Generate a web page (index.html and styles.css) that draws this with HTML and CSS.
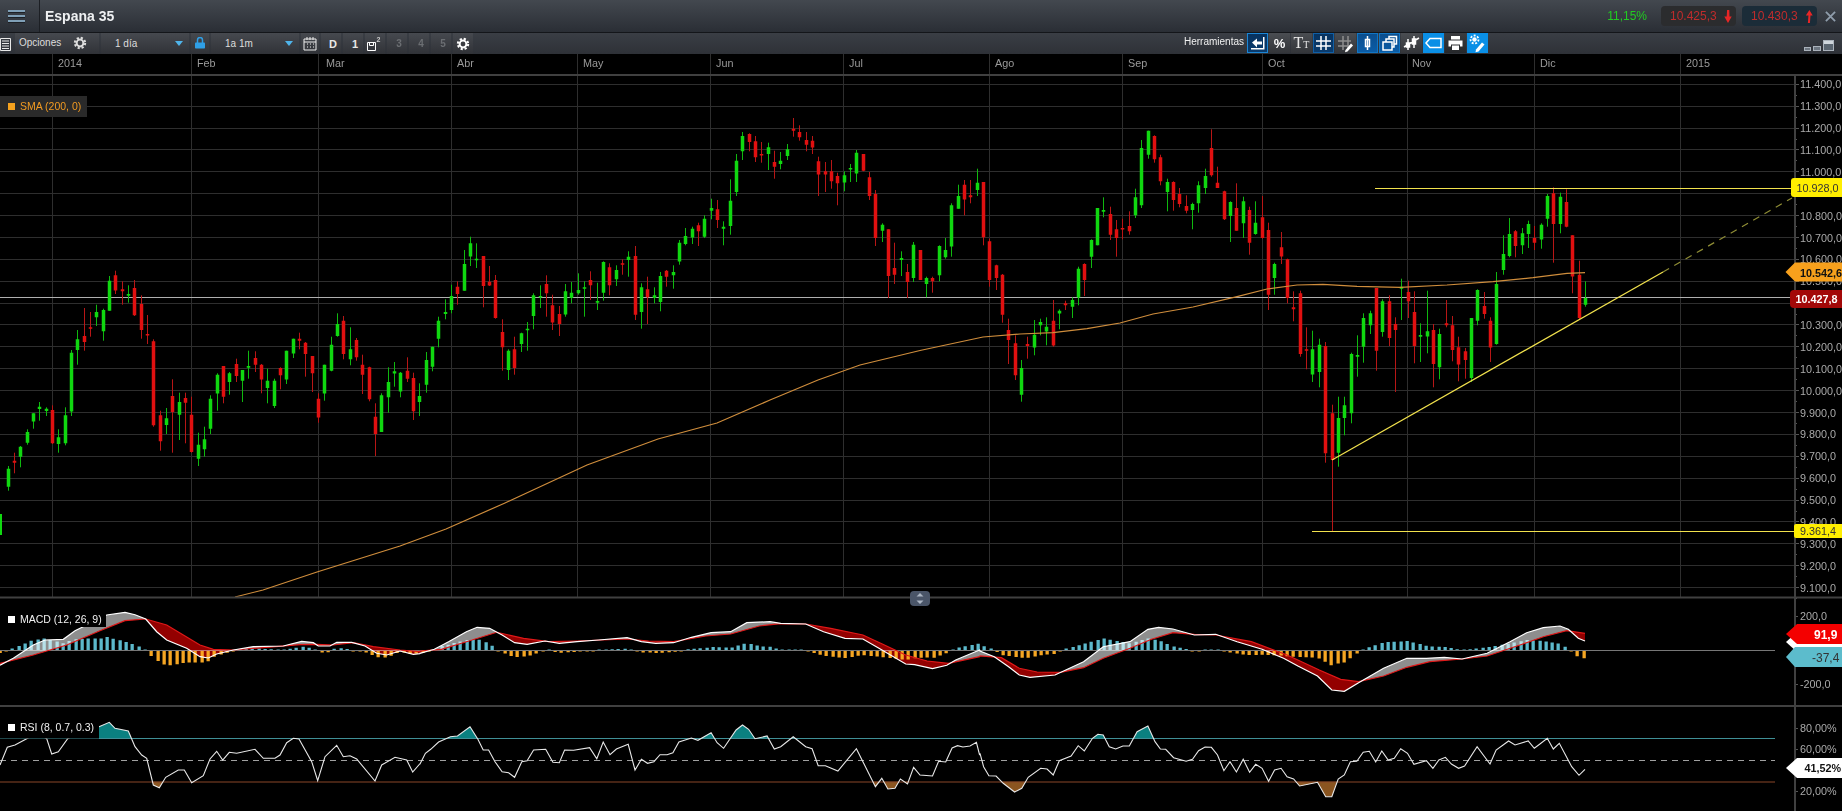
FILE: index.html
```html
<!DOCTYPE html>
<html lang="es">
<head>
<meta charset="utf-8">
<title>Espana 35</title>
<link rel="stylesheet" href="styles.css">
</head>
<body>
<div class="app">
  <header class="topbar">
    <button class="menu" aria-label="Menu"><span></span><span></span><span></span></button>
    <h1 class="title">Espana 35</h1>
    <div class="quotes">
      <span class="change">11,15%</span>
      <span class="quote bid">10.425,3
        <svg class="arrow" viewBox="0 0 8 14"><path d="M3 0h2.400l.2 7H8l-4 7-4-7h2.600z"/></svg>
      </span>
      <span class="quote ask">10.430,3
        <svg class="arrow" viewBox="0 0 8 14"><path d="M4.400 0L8 6H5.600l-.6 8H2.800l.6-8H.6z"/></svg>
      </span>
      <svg class="close" viewBox="0 0 12 12"><path d="M1 1l10 10M11 1L1 11"/></svg>
    </div>
  </header>

  <nav class="toolbar">
    <div class="tile tile-doc">
      <svg viewBox="0 0 11 16" class="ico-doc"><path d="M.5 2.500h10v12H.5zM2 5h7M2 7.500h7M2 10h7M2 12.500h7"/></svg>
    </div>
    <div class="tile tile-opt">
      <span>Opciones</span>
      <svg class="gear" viewBox="0 0 14 14"><circle cx="7" cy="7" r="3.400"/><circle class="teeth" cx="7" cy="7" r="5.200"/></svg>
    </div>
    <div class="tile tile-sel"><span>1 día</span><i class="caret"></i></div>
    <div class="tile tile-ico">
      <svg class="ico-lock" viewBox="0 0 10 12"><path class="shackle" d="M2.500 6V3a2.500 2.500 0 0 1 5 0v3"/><rect y="5.500" width="10" height="6" rx=".8"/></svg>
    </div>
    <div class="tile tile-sel"><span>1a 1m</span><i class="caret"></i></div>
    <div class="tile tile-cal">
      <svg class="ico-cal" viewBox="0 0 14 15"><path d="M1 3h12v11H1zM1 6h12M4 1v3M7 1v3M10 1v3M4 8h1M7 8h1M10 8h1M4 11h1M7 11h1M10 11h1"/></svg>
    </div>
    <div class="tile tile-num strong shift">D</div>
    <div class="tile tile-num strong shift">1</div>
    <div class="tile tile-num save">
      <svg class="ico-save" viewBox="0 0 9 9"><path d="M.5.5h8v8h-8zM2.500.5v3h4v-3"/></svg><sup>2</sup>
    </div>
    <div class="tile tile-num dim shift">3</div>
    <div class="tile tile-num dim shift">4</div>
    <div class="tile tile-num dim shift">5</div>
    <div class="tile tile-num">
      <svg class="gear white" viewBox="0 0 14 14"><circle cx="7" cy="7" r="3.400"/><circle class="teeth" cx="7" cy="7" r="5.200"/></svg>
    </div>

    <div class="tools">
      <span class="tools-label">Herramientas</span>
      <div class="tool on-dark frame"><svg class="solid" viewBox="0 0 21 20"><path d="M5 9.500L10 5.500v3h5v3h-5v3zM16 4h1.500v12.500H4V15h12z"/></svg></div>
      <div class="tool"><span class="pct">%</span></div>
      <div class="tool"><span class="tt">T<small>T</small></span></div>
      <div class="tool on-dark"><svg class="bold" viewBox="0 0 21 20"><path d="M8 3v14M13 3v14M3 8h15M3 13h15"/></svg></div>
      <div class="tool"><svg class="bold" viewBox="0 0 21 20"><path class="faint" d="M8 3v14M13 3v14M3 8h13M3 13h13"/><path class="fat" d="M10.500 17l5.500-6.500 2 2-5.500 6-2.500.8z"/></svg></div>
      <div class="tool on-mid"><svg class="bold" viewBox="0 0 21 20"><path d="M10.500 3v14M8.500 6.500h4v7h-4z"/></svg></div>
      <div class="tool on-mid"><svg class="bold" viewBox="0 0 21 20"><path d="M4 9h9v8H4zM7 9V6h8v8h-2M10 6V3.500h7.500v7.500H15"/></svg></div>
      <div class="tool"><svg class="bold" viewBox="0 0 21 20"><path d="M7 6v11M5.500 10h3v4h-3zM13 3v12M11.500 6h3v5h-3zM3 14L18 5"/></svg></div>
      <div class="tool on-bright"><svg class="bold" viewBox="0 0 21 20"><path d="M7 5.500h11v9H7L3 10z"/></svg></div>
      <div class="tool tool-dark"><svg class="solid" viewBox="0 0 21 20"><path d="M6 3h9v3.500H6zM3.500 7.500h14v6h-2.500v-2H6v2H3.500zM7 12.500h7V17H7z"/></svg></div>
      <div class="tool on-bright"><svg viewBox="0 0 21 20"><circle class="hub" cx="7.500" cy="6.500" r="2.200"/><circle class="teeth2" cx="7.500" cy="6.500" r="4"/><path class="fat" d="M9 16.500l6-7 2.500 2-6 7-3 .8z"/></svg></div>
    </div>

    <div class="win-btns"><i></i><i class="mid"></i><i class="calc"></i></div>
  </nav>

  <main class="stage">
    <svg class="chart" viewBox="0 54 1842 757" width="1842" height="757" xmlns="http://www.w3.org/2000/svg">
      <g id="grid"></g>
      <line class="last" x1="0" y1="297.500" x2="1790" y2="297.500"/>
      <g id="candles"></g>
      <polyline id="sma" class="sma"/>
      <g class="draw">
        <line x1="1375" y1="188.500" x2="1791" y2="188.500"/>
        <line x1="1312" y1="531.500" x2="1794" y2="531.500"/>
        <line x1="1332" y1="460" x2="1663" y2="272"/>
        <line class="dash" x1="1663" y1="272" x2="1792" y2="198"/>
      </g>

      <g id="macd"></g>
      <g id="rsi"></g>

      <g id="frame"></g>

      <g class="tx time">
        <text x="58" y="67">2014</text><text x="197" y="67">Feb</text><text x="326" y="67">Mar</text>
        <text x="457" y="67">Abr</text><text x="583" y="67">May</text><text x="716" y="67">Jun</text>
        <text x="849" y="67">Jul</text><text x="995" y="67">Ago</text><text x="1128" y="67">Sep</text>
        <text x="1268" y="67">Oct</text><text x="1412" y="67">Nov</text><text x="1540" y="67">Dic</text>
        <text x="1686" y="67">2015</text>
      </g>

      <g class="tx axis">
        <text x="1800" y="88.300">11.400,0</text><text x="1800" y="110.200">11.300,0</text>
        <text x="1800" y="132.100">11.200,0</text><text x="1800" y="153.900">11.100,0</text>
        <text x="1800" y="175.800">11.000,0</text>
        <text x="1800" y="219.600">10.800,0</text><text x="1800" y="241.500">10.700,0</text>
        <text x="1800" y="263.300">10.600,0</text><text x="1800" y="285.200">10.500,0</text>
        <text x="1800" y="329">10.300,0</text>
        <text x="1800" y="350.900">10.200,0</text><text x="1800" y="372.700">10.100,0</text>
        <text x="1800" y="394.600">10.000,0</text><text x="1800" y="416.500">9.900,0</text>
        <text x="1800" y="438.400">9.800,0</text><text x="1800" y="460.300">9.700,0</text>
        <text x="1800" y="482.100">9.600,0</text><text x="1800" y="504">9.500,0</text>
        <text x="1800" y="525.900">9.400,0</text><text x="1800" y="547.800">9.300,0</text>
        <text x="1800" y="569.700">9.200,0</text><text x="1800" y="591.500">9.100,0</text>
        <text x="1800" y="620">200,0</text><text x="1800" y="688">-200,0</text>
        <text x="1800" y="732">80,00%</text><text x="1800" y="753">60,00%</text><text x="1800" y="795">20,00%</text>
      </g>

      <g class="legend">
        <rect class="sma-box" x="0" y="96" width="87" height="21"/>
        <rect class="sma-dot" x="8" y="103" width="7" height="7"/>
        <text class="sma-txt" x="20" y="110">SMA (200, 0)</text>
        <rect x="0" y="610" width="106" height="17"/>
        <rect class="wdot" x="8" y="616" width="7" height="7"/>
        <text class="wtxt" x="20" y="623">MACD (12, 26, 9)</text>
        <rect x="0" y="722" width="99" height="16.500"/>
        <rect class="wdot" x="8" y="724" width="7" height="7"/>
        <text class="wtxt" x="20" y="731">RSI (8, 0.7, 0.3)</text>
      </g>

      <g class="handle">
        <rect x="910" y="591" width="20" height="15" rx="4"/>
        <path d="M920 593l3.500 3.500h-7zM920 604l3.500-3.500h-7z"/>
      </g>

      <g class="flags">
        <rect class="f-yellow" x="1791" y="178" width="54" height="19" rx="3"/>
        <text class="ft dark" x="1796.500" y="192">10.928,0</text>
        <polygon class="f-orange" points="1785.500,272 1795,262.500 1842,262.500 1842,281.500 1795,281.500"/>
        <text class="ft bold" x="1800" y="276.500">10.542,6</text>
        <rect class="f-dred" x="1790" y="290" width="55" height="18" rx="4"/>
        <text class="ft bold white" x="1795.500" y="303">10.427,8</text>
        <rect class="f-yellow" x="1794" y="524" width="51" height="14" rx="2"/>
        <text class="ft dark" x="1800" y="535">9.361,4</text>
        <polygon class="f-white" points="1786,642 1797,632 1842,632 1842,652 1797,652"/>
        <polygon class="f-red" points="1786,634 1797,624 1842,624 1842,644 1797,644"/>
        <text class="ft bold white big" x="1814" y="638.500">91,9</text>
        <polygon class="f-cyan" points="1786,657 1795,647 1842,647 1842,667 1795,667"/>
        <text class="ft dark big" x="1812" y="661.500">-37,4</text>
        <polygon class="f-white" points="1786,768 1797,758 1842,758 1842,778 1797,778"/>
        <text class="ft bold" x="1804.500" y="772">41,52%</text>
      </g>
    </svg>
  </main>
</div>
<script src="chart.js"></script>
</body>
</html>
```
FILE: styles.css
```css
* { box-sizing: border-box; }
html, body { margin: 0; height: 100%; background: #000; overflow: hidden; }
body { font-family: "Liberation Sans", Arial, sans-serif; color: #ddd; }
.app { width: 1842px; height: 811px; display: flex; flex-direction: column; }

/* title bar */
.topbar {
  height: 33px; display: flex; align-items: center;
  background: linear-gradient(#43484f, #2a2e35);
  border-bottom: 1px solid #14161a;
}
.menu {
  width: 40px; height: 32px; padding: 0 14px 0 8px; background: none; border: 0;
  border-right: 1px solid #1c1f24;
  display: flex; flex-direction: column; justify-content: center; gap: 3px;
}
.menu span { display: block; height: 2px; background: #7f9fb6; box-shadow: 0 1px 0 #1d2025; }
.title { margin: 0 0 0 5px; font-size: 14px; font-weight: bold; color: #eef0f2; }
.quotes { margin-left: auto; display: flex; align-items: center; }
.change { font-size: 12px; color: #22cc22; margin-right: 14px; }
.quote {
  width: 75px; height: 20px; padding-left: 9px; border-radius: 4px; margin-right: 6px;
  display: flex; align-items: center; justify-content: space-between; padding-right: 4px;
  font-size: 12px; color: #c02c2c;
}
.bid { background: #2b2c2e; }
.ask { background: #1b2c38; }
.arrow { width: 8px; height: 13px; fill: #e82626; }
.close { width: 11px; height: 11px; margin: 0 6px 0 2px; stroke: #8f9dab; stroke-width: 2; fill: none; }

/* toolbar */
.toolbar {
  height: 21px; display: flex; gap: 2px;
  background: linear-gradient(#3a3e45, #2e3137);
}
.tile {
  height: 21px; display: flex; align-items: center; justify-content: center;
  background: linear-gradient(#46494f, #303237);
  font-size: 10px; color: #ddd; position: relative;
}
.tile-doc { width: 13px; justify-content: flex-start; background: none; }
.ico-doc { width: 11px; height: 16px; stroke: #e8e8e8; fill: none; }
.tile-opt { width: 84px; justify-content: space-between; padding: 0 12px 2px 4px; }
.tile-sel { width: 88px; justify-content: space-between; padding: 0 6px 0 14px; }
.tile-ico { width: 18px; }
.tile-cal { width: 18px; }
.tile-num { width: 20px; }
.shift { padding-left: 4px; }
.strong { font-weight: bold; font-size: 11px; color: #e8e8e8; }
.dim { font-weight: bold; color: #6b6e72; }
.caret { width: 0; height: 0; border: 4px solid transparent; border-top: 5px solid #4fb4ea; border-bottom: 0; }
.gear { width: 14px; height: 14px; }
.gear circle { fill: none; stroke: #ddd; stroke-width: 2; }
.gear .teeth { stroke-width: 2; stroke-dasharray: 2.200 1.900; }
.gear.white circle { stroke: #fff; }
.ico-lock { width: 10px; height: 12px; fill: #2f9fe6; margin-bottom: 2px; }
.ico-lock .shackle { fill: none; stroke: #2f9fe6; stroke-width: 1.500; }
.ico-cal { width: 14px; height: 15px; stroke: #eee; fill: none; }
.ico-save { width: 9px; height: 9px; stroke: #fff; fill: none; margin: 5px 0 0 -3px; }
.save sup { font-size: 7px; font-weight: bold; color: #ccc; margin: -8px 0 0 1px; line-height: 1; }

.tools { margin-left: 708px; display: flex; align-items: stretch; gap: 1px; }
.tools-label { font-size: 10px; color: #f0f0f0; width: 63px; padding: 3px 0 0 1px; }
.tool {
  width: 21px; height: 20px; display: flex; align-items: center; justify-content: center;
  background: linear-gradient(#4a4d52, #333539); color: #fff;
}
.tool svg { width: 21px; height: 20px; fill: none; stroke: #fff; stroke-width: 1.100; }
.tool svg.bold { stroke-width: 1.500; }
.tool svg.solid { fill: #fff; stroke: none; }
.tool .faint { stroke: #8f8f8f; }
.tool .fat { fill: #fff; stroke: none; }
.tool .hub { fill: #fff; stroke: none; }
.tool-dark { background: linear-gradient(#3a3c40, #26282b); }
.on-dark { background: linear-gradient(#07325e, #0a3c6e); box-shadow: inset 0 0 0 1px #0f5fa6; }
.on-dark.frame { box-shadow: inset 0 0 0 1px #1b86d6; }
.on-mid { background: linear-gradient(#0b4d8c, #0a5da8); box-shadow: inset 0 0 0 1px #1176c4; }
.on-bright { background: #0a8fe6; }
.teeth2 { stroke-width: 1.800; stroke-dasharray: 2 1.500; }
.pct { font-size: 13px; font-weight: bold; }
.tt { font-family: "Liberation Serif", serif; font-size: 16px; color: #e8e8e8; }
.tt small { font-size: 10px; }
.win-btns { margin-left: auto; display: flex; align-items: flex-end; gap: 2px; padding: 0 8px 3px 0; }
.win-btns i { display: block; width: 7px; height: 4px; border: 1px solid #aab2bb; background: #6d7680; }
.win-btns i.mid { width: 8px; height: 5px; }
.win-btns i.calc { width: 11px; height: 11px; background: linear-gradient(#cfd6dc 35%, #5a6570 35%); }

/* chart */
.stage { flex: 1; background: #000; overflow: hidden; }
.chart { display: block; }
.last { stroke: #b0b0b0; stroke-width: 1; }
.sma { fill: none; stroke: #cf8d3c; stroke-width: 1.200; }
.draw line { stroke: #f2e24d; stroke-width: 1.200; }
.draw .dash { stroke: #8f8d35; stroke-dasharray: 7 6; }
.tx text { font-family: "Liberation Sans", Arial, sans-serif; font-size: 10.800px; fill: #aaa; }
.time text { fill: #9a9a9a; }
.legend rect { fill: #000; }
.legend text { font-family: "Liberation Sans", Arial, sans-serif; font-size: 10.500px; }
.legend .sma-box { fill: #2a2a2a; }
.legend .sma-dot { fill: #f5a21e; }
.sma-txt { fill: #f09a22; }
.legend .wdot { fill: #fff; }
.wtxt { fill: #f0f0f0; }
.handle rect { fill: #4a5568; }
.handle path { fill: #aab4c2; }
.f-yellow { fill: #ffee00; }
.f-orange { fill: #f7a01c; }
.f-dred { fill: #a30808; }
.f-white { fill: #fff; }
.f-red { fill: #f40000; }
.f-cyan { fill: #5cbccc; }
.ft { font-family: "Liberation Sans", Arial, sans-serif; font-size: 10.800px; fill: #111; }
.ft.dark { fill: #333; }
.ft.bold { font-weight: bold; }
.ft.white { fill: #fff; }
.ft.big { font-size: 12px; }
```
FILE: chart.js
```js
var NS = "http://www.w3.org/2000/svg";
function el(parent, name, attrs) {
  var n = document.createElementNS(NS, name);
  for (var k in attrs) n.setAttribute(k, attrs[k]);
  parent.appendChild(n);
  return n;
}
function $(id) { return document.getElementById(id); }

/* ---------- grid and frame ---------- */
var grid = $("grid"), frame = $("frame");
var vlines = [52.5, 191.5, 318.5, 451.5, 577.5, 710.5, 843.5, 989.5, 1122.5, 1262.5, 1407.5, 1534.5, 1680.5];
var gridPath = "", tickPath = "";
for (var k = 0; k < 24; k++) {
  var gy = Math.floor(84.3 + 21.88 * k) + 0.5;
  if (gy < 597) gridPath += "M0 " + gy + "H1794";
  tickPath += "M1795 " + gy + "h4M1795 " + (gy + 11) + "h2";
}
vlines.forEach(function (x) { gridPath += "M" + x + " 54V597"; });
el(grid, "path", { d: gridPath, stroke: "#2e2e2e", "stroke-width": 1, fill: "none" });

[616, 684, 728, 749, 791].forEach(function (y) { tickPath += "M1795 " + (y + 0.5) + "h3"; });
el(frame, "path", { d: tickPath, stroke: "#555", fill: "none" });
el(frame, "path", {
  d: "M0 75H1842M0 597.5H1842M0 706H1842M1795 76V811",
  stroke: "#404040", "stroke-width": 2, fill: "none"
});

/* ---------- candles: x, colour, wick top, body top, body bottom, wick bottom ---------- */
var blocks = [
  [0, 230, "23 g 708 716 770 782;42 r 668 692 698 730;61 g 648 650 680 712;80 g 598 606 638 644;99 g 550 550 575 596;118 g 516 530 537 572;137 g 532 536 543 558;156 r 526 540 640 642;175 g 598 622 642 668;194 g 532 556 640 646;213 g 360 368 544 558;232 g 300 328 360 404;251 r 234 318 336 362;270 r 246 292 296 320;289 g 224 246 262 288;308 g 236 240 304 332;327 g 138 152 242 242;346 r 122 136 182 192;365 r 154 178 184 224;384 g 166 192 197 218;403 r 150 174 256 258;422 r 196 222 300 326;441 r 255 312 315 342;460 r 328 334 586 590;479 r 542 556 634 662;498 g 534 565 585 612;517 r 448 498 546 668;536 g 488 516 554 630;555 r 488 504 518 640;574 r 500 554 666 668;593 g 608 644 686 708;612 g 590 628 658 680;631 g 496 506 596 612;650 g 430 434 490 542;669 r 408 408 500 520;688 g 426 430 456 494;707 r 386 402 438 456;726 g 420 420 452 516;745 g 362 408 413 446;764 r 364 384 404 426;783 r 402 404 448 490;802 g 416 452 474 520;821 g 446 452 528 534;840 r 412 414 436 478;859 g 362 362 448 462;878 g 326 326 370 384;897 r 308 326 332 358;916 r 336 338 372 440;935 r 378 378 430 486;954 r 490 506 562 578;973 g 404 404 490 512;992 g 320 344 422 424;1011 g 250 282 318 320;1030 r 258 272 372 388;1049 g 292 358 388 406;1068 r 324 330 382 392;1087 r 374 404 434 492;1106 r 410 412 508 514;1125 r 520 560 612 678;1144 g 490 496 606 606;1163 g 412 456 502 548;1182 g 396 424 431 470;1201 g 426 428 484 502;1220 r 382 422 446 456;1239 r 428 444 544 570;1258 g 460 498 516 558;1277 g 366 390 464 488;1296 g 350 350 410 424;1315 g 260 272 326 352;1334 g 208 246 252 268;1353 g 164 198 240 250;1372 r 154 170 192 224"],
  [460, 100, "11 g 450 492 572 572;30 g 410 430 470 498;49 g 430 476 480 504;68 r 468 468 558 622;87 r 498 545 556 558;106 r 525 540 654 656;125 r 658 696 742 812;144 g 748 752 810 840;163 r 710 748 804 824;182 g 698 700 732 756;201 g 666 686 690 752;220 g 580 586 648 688;239 g 556 588 592 624;258 r 526 552 580 650;277 r 584 616 668 690;296 r 618 642 672 708;315 g 552 574 644 650;334 g 546 578 594 610;353 g 520 570 580 584;372 g 544 562 566 650;391 r 514 540 556 600;410 g 548 603 608 630;429 g 484 486 578 602;448 r 490 502 556 586;467 g 496 510 538 558;486 r 478 490 494 524;505 g 454 470 480 530;524 r 438 468 644 660;543 g 550 562 636 686;562 r 530 568 592 672;581 g 562 586 594 610;600 g 516 528 606 634;619 r 510 512 530 560;638 g 496 516 526 566;657 g 420 428 484 494;676 g 384 408 432 436;695 g 380 386 412 432;714 r 368 376 394 438;733 g 346 356 410 414;752 g 296 324 332 358;771 r 300 328 360 384;790 g 364 380 386 436;809 g 238 302 378 404;828 g 162 182 276 288;847 g 96 108 154 180;866 r 100 102 126 154;885 r 108 124 172 186;904 r 126 162 166 188;923 g 128 142 162 210;942 r 152 186 200 236;961 g 156 182 192 208;980 g 132 148 168 180;999 r 54 86 92 110;1018 r 76 96 112 122;1037 r 96 120 134 154;1056 r 108 122 142 162;1075 r 170 184 224 288;1094 r 186 214 224 276;1113 r 180 214 244 266;1132 r 218 228 250 316;1151 g 214 226 248 274;1170 g 192 204 208 246;1189 g 150 158 220 246;1208 r 162 162 212 214;1227 r 216 232 288 300;1246 r 270 282 414 438;1265 g 370 374 392 426;1284 r 388 388 528 594;1303 r 428 504 524 552;1322 g 454 474 480 528;1341 r 492 516 546 594;1360 g 426 434 534 546;1379 r 450 450 540 540"],
  [920, 100, "18 g 530 534 552 592;37 r 530 534 544 578;56 g 436 438 526 544;75 g 414 450 472 476;94 g 310 316 440 470;113 g 254 288 326 326;132 r 240 254 298 346;151 r 240 286 292 310;170 g 206 248 270 288;189 r 246 246 412 436;208 r 416 424 540 560;227 r 494 496 534 570;246 r 522 524 644 668;265 r 656 690 720 792;284 r 706 730 826 840;303 g 780 804 884 905;322 r 710 732 738 776;341 g 660 704 742 766;360 g 656 666 676 706;379 g 652 680 694 736;398 r 600 662 736 740;417 g 628 632 640 688;436 r 602 610 616 630;455 g 592 600 620 654;474 g 500 506 592 616;493 r 490 492 540 588;512 g 418 420 470 504;531 g 324 324 436 436;550 g 292 330 335 352;569 r 320 342 404 420;588 r 360 388 414 470;607 r 356 384 388 418;626 r 334 378 394 404;645 g 266 292 346 354;664 g 120 144 316 324;683 g 92 92 164 176;702 r 106 108 178 188;721 r 164 172 244 256;740 g 236 246 276 334;759 r 244 246 300 332;778 r 264 282 312 322;797 r 286 318 332 340;816 g 308 312 330 388;835 g 244 256 310 338;854 g 206 228 264 282;873 r 88 144 226 230;892 r 200 248 264 264;911 r 272 274 358 360;930 g 304 306 348 426;949 r 250 324 392 392;968 g 290 304 370 414;987 r 320 330 428 464;1006 g 304 368 402 404;1025 r 288 352 414 416;1044 r 368 390 584 630;1063 g 488 492 534 584;1082 r 396 442 470 492;1101 r 476 478 594 610;1120 r 574 622 628 664;1139 r 572 580 762 770;1158 r 682 748 752 808;1177 g 692 748 824 846;1196 g 716 734 816 862"],
  [1300, 170, "76 r 516 528 850 878;95 r 704 730 870 1084;114 g 680 744 848 890;133 g 680 706 744 796;152 g 548 552 730 760;171 g 496 555 560 620;190 g 430 444 530 578;209 g 422 430 466 492;228 r 354 354 542 602;247 g 388 394 486 500;266 r 376 394 504 528;285 r 442 462 480 666;304 g 326 350 356 450;323 r 332 366 394 444;342 r 364 426 528 580;361 g 460 495 500 576;380 g 362 484 500 550;399 r 462 480 582 652;418 g 476 492 592 628;437 r 390 460 466 472;456 r 438 466 540 574;475 r 500 532 584 634;494 r 534 544 570 626;513 g 444 444 624 636;532 g 358 360 452 466;551 r 366 408 432 446;570 r 442 452 532 576;589 g 306 342 522 524;608 g 196 252 300 314;627 g 144 192 258 262;646 r 180 184 228 262;665 g 174 190 226 252;684 g 152 162 192 234;703 r 168 204 218 240;722 g 160 164 208 236;741 g 72 78 146 170;760 r 52 70 162 278;779 g 68 80 162 190;798 r 58 96 170 172;817 r 196 196 320 370;836 r 272 314 444 448;855 g 334 384 404 410"]
];
var wick = { g: "", r: "" }, body = { g: "", r: "" };
body.g += "M0 514h2v21h-2z";
blocks.forEach(function (b) {
  b[2].split(";").forEach(function (row) {
    var p = row.split(" ");
    var x = Math.round(b[0] + p[0] / 3);
    var c = p[1];
    var w1 = b[1] + p[2] / 3, t = b[1] + p[3] / 3, u = b[1] + p[4] / 3, w2 = b[1] + p[5] / 3;
    wick[c] += "M" + x + " " + w1.toFixed(1) + "V" + w2.toFixed(1);
    var h = Math.max(u - t, 1.5);
    body[c] += "M" + (x - 1.25) + " " + t.toFixed(1) + "h3.5v" + h.toFixed(1) + "h-3.5z";
  });
});
var cg = $("candles");
el(cg, "path", { d: wick.g, stroke: "#0fb80f", "stroke-width": 1, fill: "none", transform: "translate(.5 0)" });
el(cg, "path", { d: wick.r, stroke: "#b81616", "stroke-width": 1, fill: "none", transform: "translate(.5 0)" });
el(cg, "path", { d: body.g, fill: "#10d810" });
el(cg, "path", { d: body.r, fill: "#e01010" });

/* ---------- SMA ---------- */
$("sma").setAttribute("points",
  "235,597 263,590 317,572 400,546 446,529 505,503 587,465 658,439 717,423 770,400 818,380 860,365 920,350.5 983,337 1020,334 1053,332.7 1087,328.7 1120,323 1153,314 1193,307 1237,296.7 1267,289 1297,285 1323,284.3 1357,286.3 1400,287.3 1447,285 1493,281.7 1533,277.7 1567,273.3 1585,272.7");

/* ---------- helpers for the indicator curves ---------- */
function zoomed(ox, sx, oy, list) {
  var out = [];
  for (var i = 0; i < list.length; i += 2) out.push([ox + list[i] / sx, oy + list[i + 1] / 3]);
  return out;
}
function at(pts, x) {
  if (x <= pts[0][0]) return pts[0][1];
  for (var i = 1; i < pts.length; i++) {
    if (x <= pts[i][0]) {
      var a = pts[i - 1], b = pts[i];
      return a[1] + (b[1] - a[1]) * (x - a[0]) / (b[0] - a[0] || 1);
    }
  }
  return pts[pts.length - 1][1];
}
function line(pts) {
  return pts.map(function (p) { return p[0].toFixed(1) + "," + p[1].toFixed(1); }).join(" ");
}

/* ---------- MACD ---------- */
var white = [].concat(
  zoomed(0, 3, 590, [0,226,40,205,100,165,135,150,190,148,225,122,260,105,300,88,320,75,375,67,405,74,437,87,470,125,500,150,560,175,600,200,625,204,650,192,700,180,760,170,850,168,905,154,940,158,955,168,990,168,1010,157,1055,157,1095,168,1130,190,1160,195,1200,183,1240,193,1259,191]),
  zoomed(420, 2.8, 590, [0,190,40,178,80,155,130,125,160,112,195,115,230,135,265,158,300,163,350,153,390,160,440,155,500,150,580,143,620,155,660,160,710,158,760,142,815,128,870,125,915,98,980,95,1010,100,1080,102,1130,125,1190,145,1240,147,1290,178,1360,222,1385,224,1435,236,1475,226,1500,210,1567,180]),
  zoomed(980, 2.8, 590, [0,183,40,200,80,230,110,255,140,262,210,255,290,215,345,170,420,155,470,118,500,112,540,117,600,135,660,133,720,155,790,178,850,205,890,228,945,258,985,300,1020,304,1060,278,1130,235,1195,205,1250,205,1300,202,1350,207,1420,190]),
  zoomed(1500, 3, 590, [30,155,80,128,130,113,180,108,205,118,235,145,255,153])
);
var red = [].concat(
  zoomed(0, 3, 590, [0,220,100,195,200,165,300,122,375,92,437,87,500,105,600,165,640,178,700,180,800,172,900,164,950,163,1000,165,1060,158,1120,170,1200,180,1259,185]),
  zoomed(420, 2.8, 590, [0,183,60,178,130,155,215,127,290,145,360,155,440,153,580,147,640,153,710,155,800,138,870,132,950,108,1010,101,1080,102,1150,115,1240,135,1290,160,1360,195,1420,213,1480,220,1567,200]),
  zoomed(980, 2.8, 590, [0,198,60,203,110,235,160,246,225,247,290,233,345,205,420,175,480,148,540,128,600,133,660,135,760,155,860,195,950,240,1010,268,1060,275,1130,258,1195,232,1260,215,1350,207,1420,198]),
  zoomed(1500, 3, 590, [60,165,130,140,200,122,255,130])
);
var macd = $("macd");
el(macd, "path", { d: "M0 650.5H1775", stroke: "#777", "stroke-width": 1 });

var up = "", down = "";
for (var i = -1; i <= 250; i++) {
  var bx = 6.17 + 6.31 * i;
  var diff = at(red, bx) - at(white, bx);
  var h = Math.abs(diff);
  if (h < 0.6) h = 0.6;
  var lx = Math.round(bx) - 1.5;
  if (diff >= 0) up += "M" + lx + " 650h3.3v" + (-h).toFixed(1) + "h-3.3z";
  else down += "M" + lx + " 651h3.3v" + h.toFixed(1) + "h-3.3z";
}
el(macd, "path", { d: up, fill: "#5cb9cc" });
el(macd, "path", { d: down, fill: "#f5a623" });

var gray = "", dark = "";
for (var x = 0.5; x < 1585.5; x += 1) {
  var wy = at(white, x), ry = at(red, x);
  if (wy < ry) gray += "M" + x + " " + wy.toFixed(1) + "V" + ry.toFixed(1);
  else dark += "M" + x + " " + ry.toFixed(1) + "V" + wy.toFixed(1);
}
el(macd, "path", { d: gray, stroke: "#8e8e8e", "stroke-width": 1, fill: "none", style: "mix-blend-mode:screen" });
el(macd, "path", { d: dark, stroke: "#930000", "stroke-width": 1, fill: "none", style: "mix-blend-mode:screen" });
el(macd, "polyline", { points: line(red), fill: "none", stroke: "#e01818", "stroke-width": 1.2 });
el(macd, "polyline", { points: line(white), fill: "none", stroke: "#fff", "stroke-width": 1.2 });

/* ---------- RSI ---------- */
var rsi = [].concat(
  zoomed(0, 3, 590, [0,525,22,472,45,465,80,446,110,430,140,446,155,492,175,485,203,446,230,430,297,410,328,397,345,415,385,423,405,470,425,495,440,505,460,585,478,593,497,562,535,540,553,540,575,578,610,557,630,507,650,484,668,510,688,487,710,490,765,478,790,505,825,505,840,495,860,458,880,445,897,447,935,515,953,572,975,500,1010,466,1030,500,1050,497,1070,507,1125,573,1145,525,1185,502,1220,510,1238,546,1259,522]),
  zoomed(420, 2.8, 590, [0,522,15,490,30,478,52,456,85,440,105,438,140,410,162,448,177,480,192,480,210,515,230,545,248,548,265,562,285,515,300,512,318,480,352,478,372,517,390,518,405,480,430,481,475,473,495,506,513,456,532,494,550,477,583,463,602,540,620,508,637,520,655,515,672,494,692,494,708,488,725,456,760,444,778,451,815,428,832,458,850,475,885,420,903,405,920,418,938,446,972,438,992,477,1010,470,1045,440,1080,470,1098,476,1115,527,1135,527,1170,543,1222,476,1275,590,1293,565,1310,597,1330,595,1345,567,1365,582,1382,532,1400,555,1435,558,1452,514,1472,516,1490,474,1505,467,1520,471,1540,468,1558,457,1567,495]),
  zoomed(980, 2.8, 590, [0,490,10,530,25,557,45,558,65,580,97,606,117,595,135,562,170,535,188,537,205,555,222,512,255,498,275,467,292,483,315,445,330,433,345,435,362,470,380,477,400,468,418,468,440,425,470,408,490,455,505,477,520,478,542,503,577,514,595,508,612,482,630,471,648,472,665,495,683,542,700,515,718,546,737,508,755,547,772,523,790,535,808,574,825,540,843,535,860,560,878,567,895,588,945,577,968,620,985,620,1003,567,1020,555,1037,515,1055,514,1073,487,1090,484,1108,516,1125,483,1143,510,1160,505,1178,476,1197,490,1215,523,1250,512,1268,535,1285,510,1303,502,1320,522,1340,535,1357,528,1392,470,1428,522,1445,480,1480,453,1498,465,1535,453,1552,475,1567,463]),
  zoomed(1500, 3, 590, [142,445,160,477,178,460,215,530,237,556,255,538])
);
var rg = $("rsi");
var hi = 738.7, lo = 781.7;
var teal = "", brown = "";
for (var rx = 0.5; rx < 1585.5; rx += 1) {
  var v = at(rsi, rx);
  if (v < hi) teal += "M" + rx + " " + v.toFixed(1) + "V" + hi;
  if (v > lo) brown += "M" + rx + " " + lo + "V" + v.toFixed(1);
}
el(rg, "path", { d: teal, stroke: "#0b8080", fill: "none" });
el(rg, "path", { d: brown, stroke: "#8a5520", fill: "none" });
el(rg, "path", { d: "M0 738.5H1775", stroke: "#3f8f96", "stroke-width": 1 });
el(rg, "path", { d: "M0 782H1775", stroke: "#8a4628", "stroke-width": 1 });
el(rg, "path", { d: "M0 760.5H1775", stroke: "#a0a0a0", "stroke-width": 1, "stroke-dasharray": "6 5" });
el(rg, "polyline", { points: line(rsi), fill: "none", stroke: "#e8e8e8", "stroke-width": 1.1 });
```
